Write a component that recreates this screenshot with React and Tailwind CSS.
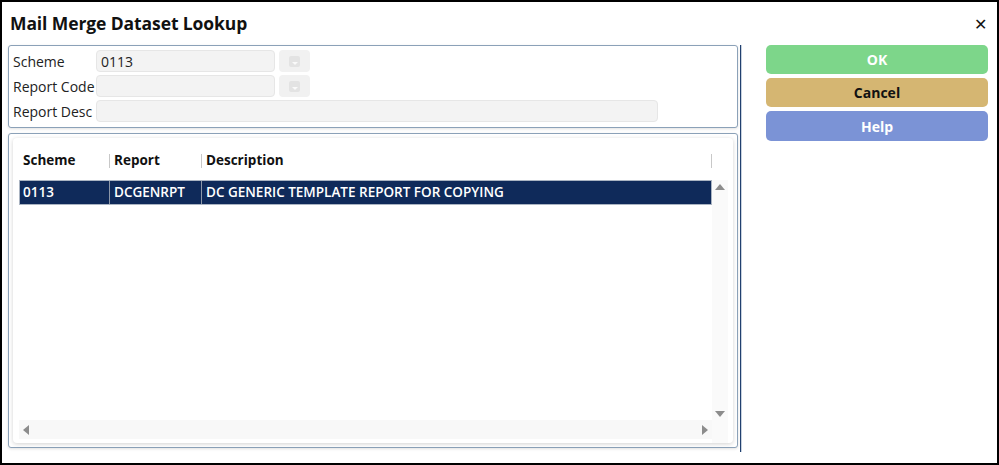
import React from "react";

const rows = [{ scheme: "0113", report: "DCGENRPT", desc: "DC GENERIC TEMPLATE REPORT FOR COPYING" }];

function LookupButton() {
  return (
    <div className="ml-[4px] flex h-[22px] w-[31px] items-center justify-center rounded-[4px] bg-[#f1f1f1]">
      <div className="flex h-[11px] w-[11px] items-end justify-center rounded-[2px] bg-[#e3e3e3]">
        <div className="mb-[2px] h-0 w-0 border-x-[3px] border-t-[3px] border-x-transparent border-t-[#fafafa]"></div>
      </div>
    </div>
  );
}

function Field({ label, value, width, lookup }) {
  return (
    <div className="flex h-[22px] items-center">
      <div className="w-[83px] text-[14px] text-[#222]">{label}</div>
      <div
        className={`flex h-[22px] items-center rounded-[4px] border border-[#e6e6e6] bg-[#f3f3f3] px-[4px] text-[14px] text-[#222] ${width}`}
      >
        {value}
      </div>
      {lookup && <LookupButton />}
    </div>
  );
}

export default function App() {
  return (
    <div
      className="relative h-[465px] w-[999px] overflow-hidden border-2 border-black bg-white text-[#111]"
      style={{ fontFamily: '"Open Sans", "Noto Sans", sans-serif' }}
    >
      {/* Title bar */}
      <div className="flex h-[43px] items-center justify-between pl-[8px] pr-[10px]">
        <h1 className="text-[17.5px] font-bold tracking-[-0.1px] text-[#111]">Mail Merge Dataset Lookup</h1>
        <span className="text-[16px] leading-none text-[#111]">✕</span>
      </div>

      <div className="flex pl-[6px]">
        {/* Left side */}
        <div className="flex w-[730px] flex-col gap-[5px]">
          {/* Criteria box */}
          <div className="flex h-[83px] flex-col gap-[3px] rounded-[3px] border border-[#8ba1b8] bg-white pl-[4px] pt-[4px] shadow-[0_1px_3px_rgba(0,0,0,0.12)]">
            <Field label="Scheme" value="0113" width="w-[179px]" lookup />
            <Field label="Report Code" value="" width="w-[179px]" lookup />
            <Field label="Report Desc" value="" width="w-[562px]" />
          </div>

          {/* Grid box */}
          <div className="h-[315px] rounded-[3px] border border-[#8ba1b8] bg-white p-[4px] shadow-[0_1px_3px_rgba(0,0,0,0.12)]">
            <div className="flex h-full flex-col rounded-[4px] bg-white pl-[6px] pr-[4px] pt-[10px] shadow-[0_1px_4px_rgba(0,0,0,0.18)]">
              {/* Header */}
              <div className="flex h-[25px] items-center text-[13.5px] font-bold text-[#111]">
                <div className="flex w-[91px] items-center justify-between pl-[4px]">
                  <span>Scheme</span>
                  <span className="h-[14px] w-px bg-[#c8c8c8]"></span>
                </div>
                <div className="flex w-[92px] items-center justify-between pl-[4px]">
                  <span>Report</span>
                  <span className="h-[14px] w-px bg-[#c8c8c8]"></span>
                </div>
                <div className="flex w-[510px] items-center justify-between pl-[4px]">
                  <span>Description</span>
                  <span className="h-[14px] w-px bg-[#c8c8c8]"></span>
                </div>
              </div>

              <div className="mt-[7px] flex flex-1">
                <div className="flex w-[693px] flex-col">
                  {rows.map((r) => (
                    <div
                      key={r.report}
                      className="flex h-[25px] items-center border border-[#aab4c2] bg-[#0f2a5a] text-[13.5px] font-semibold text-white"
                    >
                      <div className="flex h-full w-[90px] items-center border-r border-[#8c97a8] pl-[3px]">{r.scheme}</div>
                      <div className="flex h-full w-[92px] items-center border-r border-[#8c97a8] pl-[4px]">{r.report}</div>
                      <div className="flex h-full flex-1 items-center pl-[4px]">{r.desc}</div>
                    </div>
                  ))}
                  <div className="flex-1"></div>
                  {/* horizontal scrollbar */}
                  <div className="mb-[4px] flex h-[19px] items-center justify-between bg-[#f8f8f8] px-[4px]">
                    <div className="h-0 w-0 border-y-[5px] border-r-[6px] border-y-transparent border-r-[#8c8c8c]"></div>
                    <div className="h-0 w-0 border-y-[5px] border-l-[6px] border-y-transparent border-l-[#8c8c8c]"></div>
                  </div>
                </div>
                {/* vertical scrollbar */}
                <div className="flex w-[16px] flex-col items-center bg-[#fafafa] pb-[26px] pt-[4px]">
                  <div className="h-0 w-0 border-x-[5px] border-b-[6px] border-x-transparent border-b-[#8c8c8c]"></div>
                  <div className="flex-1"></div>
                  <div className="h-0 w-0 border-x-[5px] border-t-[6px] border-x-transparent border-t-[#8c8c8c]"></div>
                </div>
              </div>
            </div>
          </div>
        </div>

        {/* Divider */}
        <div className="ml-[2px] h-[407px] w-[2px] border-l border-r border-l-[#21406f] border-r-[#c8d2de]"></div>

        {/* Buttons */}
        <div className="ml-[24px] flex w-[222px] flex-col gap-[4px]">
          <button className="h-[29px] rounded-[5px] bg-[#7dd68a] text-[14px] font-bold text-white">OK</button>
          <button className="h-[29px] rounded-[5px] bg-[#d5b672] text-[14px] font-bold text-[#111]">Cancel</button>
          <button className="h-[30px] rounded-[5px] bg-[#7b93d6] text-[14px] font-bold text-white">Help</button>
        </div>
      </div>
    </div>
  );
}
